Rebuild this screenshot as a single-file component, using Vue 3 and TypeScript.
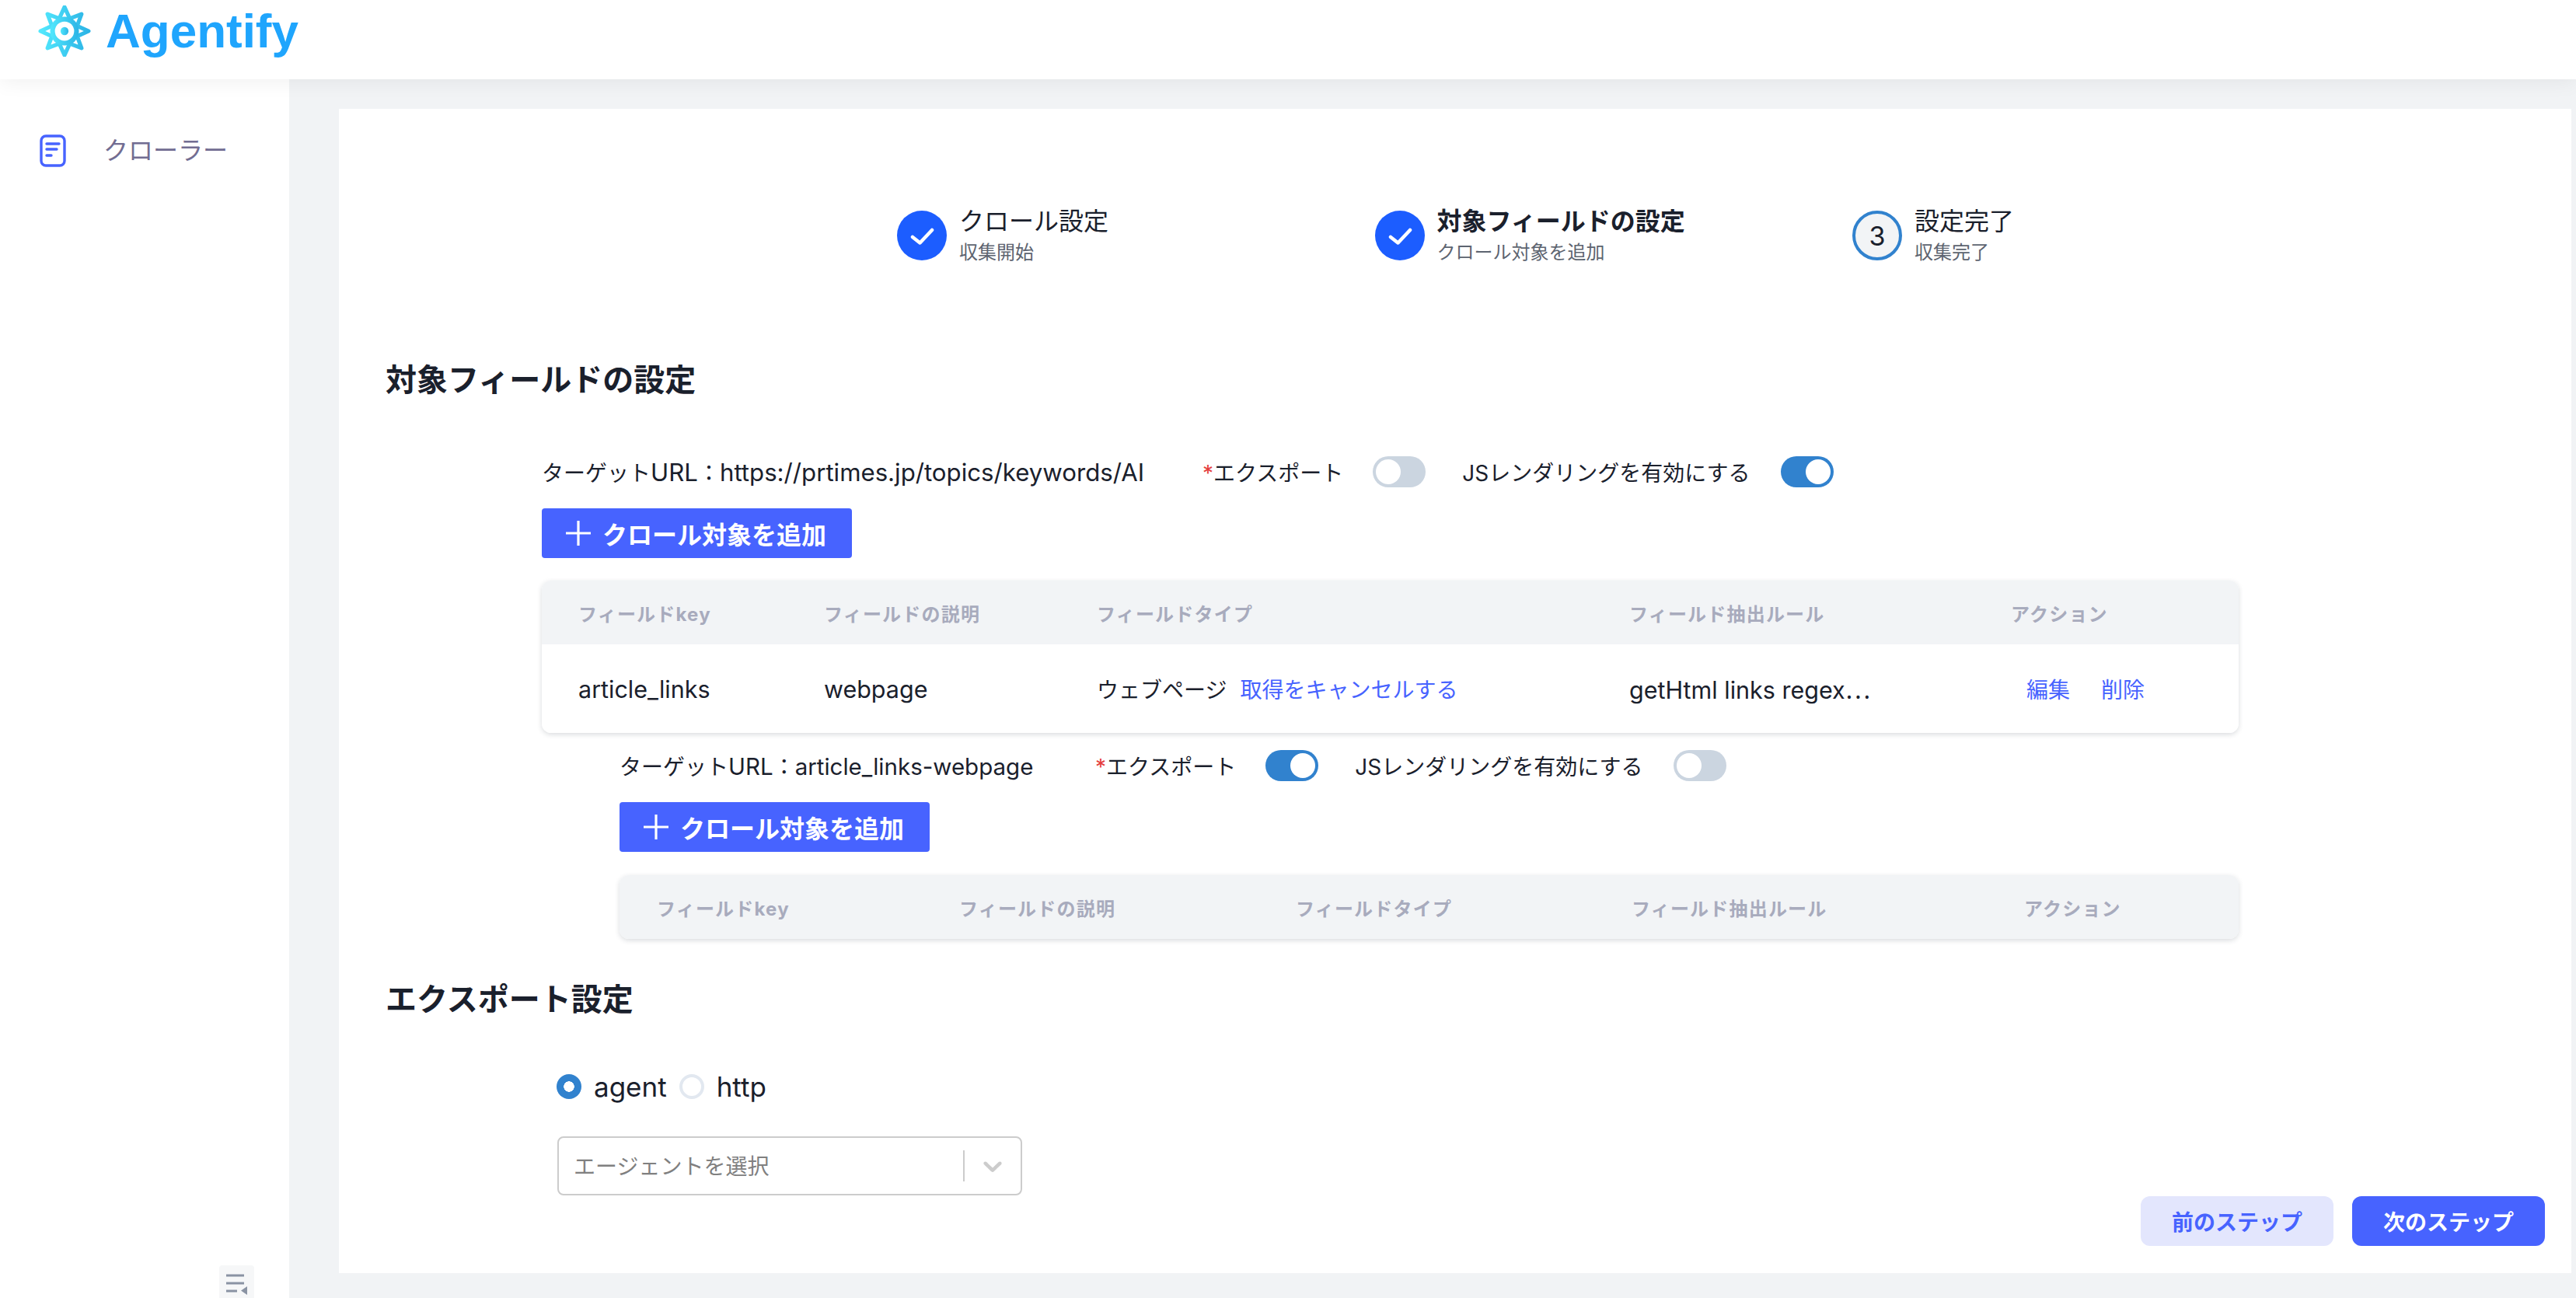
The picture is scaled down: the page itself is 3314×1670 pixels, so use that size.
<script setup lang="ts">
const cx = 33
const cy = 32
const starPoints = Array.from({ length: 16 }, (_, i) => {
  const r = i % 2 === 0 ? 30 : 17
  const a = (Math.PI / 8) * i - Math.PI / 2
  return `${(cx + r * Math.cos(a)).toFixed(2)},${(cy + r * Math.sin(a)).toFixed(2)}`
}).join(' ')

const headers = ['フィールドkey', 'フィールドの説明', 'フィールドタイプ', 'フィールド抽出ルール', 'アクション']
const steps = [
  { title: 'クロール設定', sub: '収集開始', done: true },
  { title: '対象フィールドの設定', sub: 'クロール対象を追加', done: true, strong: true },
  { title: '設定完了', sub: '収集完了', done: false },
]
</script>

<template>
  <div class="app">
    <header class="topbar">
      <div class="logo">
        <svg class="logo-mark" width="70" height="66" viewBox="0 0 66 64" aria-hidden="true">
          <defs>
            <linearGradient id="logoGrad" x1="0" y1="0" x2="1" y2="0">
              <stop offset="0" stop-color="#52e8fd" />
              <stop offset="1" stop-color="#2cb4e6" />
            </linearGradient>
          </defs>
          <polygon :points="starPoints" fill="#fff" stroke="url(#logoGrad)" stroke-width="5" stroke-linejoin="round" />
          <circle cx="33" cy="32" r="18" fill="url(#logoGrad)" />
          <circle cx="33" cy="32" r="12" fill="#fff" />
          <circle cx="33" cy="32" r="5" fill="url(#logoGrad)" />
        </svg>
        <span class="logo-text">Agentify</span>
      </div>
    </header>

    <div class="body">
      <aside class="sidebar">
        <nav class="menu-item">
          <svg width="34" height="42" viewBox="0 0 34 42" aria-hidden="true">
            <rect x="2" y="2" width="30" height="38" rx="6" fill="none" stroke="#4763ff" stroke-width="3.4" />
            <path d="M9 12h16M9 19h13M9 27h6" fill="none" stroke="#4763ff" stroke-width="3.4" stroke-linecap="round" />
          </svg>
          <span class="menu-label">クローラー</span>
        </nav>
        <button class="collapse" aria-label="collapse">
          <svg width="45" height="45" viewBox="0 0 45 45" aria-hidden="true">
            <path d="M9 13h23M9 23h23M9 33h14" stroke="#8a93a3" stroke-width="3" fill="none" />
            <path d="M36 27v11l-8-5.500z" fill="#8a93a3" />
          </svg>
        </button>
      </aside>

      <main class="main">
        <section class="card">
          <ol class="steps">
            <li v-for="s in steps" :key="s.title" class="step">
              <span class="step-icon" :class="{ done: s.done }">
                <svg v-if="s.done" width="32" height="32" viewBox="0 0 32 32" aria-hidden="true">
                  <path d="M4 18l9.500 7.500L29 9" fill="none" stroke="#fff" stroke-width="4.500" stroke-linecap="round" stroke-linejoin="round" />
                </svg>
                <template v-else>3</template>
              </span>
              <span class="step-text">
                <span class="step-title" :class="{ strong: s.strong }">{{ s.title }}</span>
                <span class="step-sub">{{ s.sub }}</span>
              </span>
            </li>
          </ol>

          <h2 class="section-title">対象フィールドの設定</h2>

          <div class="block first">
            <div class="opts">
              <span class="url url-a">ターゲット<span class="lat">URL</span>：<span class="lat">https://prtimes.jp/topics/keywords/AI</span></span>
              <span><i class="req">*</i>エクスポート</span>
              <span class="toggle gap-a"></span>
              <span class="gap-b">JSレンダリングを有効にする</span>
              <span class="toggle on gap-c"></span>
            </div>
            <button class="add-btn">
              <svg width="32" height="32" viewBox="0 0 32 32" aria-hidden="true">
                <path d="M16 0v32M0 16h32" stroke="#fff" stroke-width="3.200" />
              </svg>
              クロール対象を追加
            </button>
            <div class="table table-a">
              <div class="tr th">
                <span v-for="h in headers" :key="h">{{ h }}</span>
              </div>
              <div class="tr td">
                <span class="lat">article_links</span>
                <span class="lat">webpage</span>
                <span>ウェブページ<a class="link type-link">取得をキャンセルする</a></span>
                <span class="lat">getHtml links regex⋯</span>
                <span class="actions"><a class="link">編集</a><a class="link">削除</a></span>
              </div>
            </div>
          </div>

          <div class="block second">
            <div class="opts">
              <span class="url url-b">ターゲット<span class="lat">URL</span>：<span class="lat">article_links-webpage</span></span>
              <span><i class="req">*</i>エクスポート</span>
              <span class="toggle on gap-a"></span>
              <span class="gap-b">JSレンダリングを有効にする</span>
              <span class="toggle gap-c"></span>
            </div>
            <button class="add-btn">
              <svg width="32" height="32" viewBox="0 0 32 32" aria-hidden="true">
                <path d="M16 0v32M0 16h32" stroke="#fff" stroke-width="3.200" />
              </svg>
              クロール対象を追加
            </button>
            <div class="table table-b">
              <div class="tr th">
                <span v-for="h in headers" :key="h">{{ h }}</span>
              </div>
            </div>
          </div>

          <h2 class="section-title export-title">エクスポート設定</h2>

          <div class="export">
            <div class="radios">
              <span class="radio checked"></span><span class="radio-label">agent</span>
              <span class="radio"></span><span class="radio-label">http</span>
            </div>
            <div class="select">
              <span class="placeholder">エージェントを選択</span>
              <span class="sep"></span>
              <svg width="40" height="40" viewBox="0 0 20 20" aria-hidden="true">
                <path fill="#cccccc" d="M4.516 7.548c0.436-0.446 1.043-0.481 1.576 0l3.908 3.747 3.908-3.747c0.533-0.481 1.141-0.446 1.574 0 0.436 0.445 0.408 1.197 0 1.615-0.406 0.418-4.695 4.502-4.695 4.502-0.217 0.223-0.502 0.335-0.787 0.335s-0.57-0.112-0.789-0.335c0 0-4.287-4.084-4.695-4.502s-0.436-1.17 0-1.615z" />
              </svg>
            </div>
          </div>

          <footer class="footer">
            <button class="nav-btn prev">前のステップ</button>
            <button class="nav-btn next">次のステップ</button>
          </footer>
        </section>
      </main>
    </div>
  </div>
</template>

<style scoped>
.app {
  height: 100vh;
  display: flex;
  flex-direction: column;
  overflow: hidden;
  font-family: Inter, "Noto Sans CJK JP", sans-serif;
  font-size: 28px;
  color: #1a202c;
  background: #fff;
}
.lat {
  font-size: 30.500px;
}
.url-a .lat {
  font-size: 31.200px;
}
.url-b .lat {
  font-size: 29.500px;
}
.topbar {
  flex: 0 0 102px;
  background: #fff;
  box-shadow: 0 4px 24px rgba(0, 0, 0, 0.06);
  position: relative;
  z-index: 2;
}
.logo {
  height: 80px;
  display: flex;
  align-items: center;
  gap: 18px;
  padding-left: 48px;
}
.logo-text {
  font-family: "Liberation Sans", Arial, sans-serif;
  font-weight: 700;
  font-size: 62px;
  line-height: 1;
  color: #1fa5fd;
}
.body {
  flex: 1;
  display: flex;
  min-height: 0;
}
.sidebar {
  flex: 0 0 372px;
  position: relative;
  background: #fff;
}
.menu-item {
  display: flex;
  align-items: center;
  gap: 48px;
  padding: 71px 0 0 51px;
  font-size: 32px;
  color: #726d92;
}
.menu-label {
  line-height: 42px;
}
.collapse {
  position: absolute;
  left: 282px;
  top: 1526px;
  width: 45px;
  height: 45px;
  padding: 0;
  border: 0;
  border-radius: 4px;
  background: #f6f7f8;
  display: block;
}
.main {
  flex: 1;
  min-width: 0;
  padding: 38px 6px 32px 64px;
  background: #f1f3f5;
}
.card {
  height: 100%;
  box-sizing: border-box;
  background: #fff;
  padding: 125px 34px 0 60px;
}
.steps {
  list-style: none;
  margin: 0 0 124px;
  padding: 0 0 0 658px;
  display: flex;
}
.step {
  flex: 0 0 614.500px;
  display: flex;
  align-items: center;
  gap: 16px;
}
.step:last-child {
  flex: 0 0 auto;
}
.step-icon {
  width: 64px;
  height: 64px;
  box-sizing: border-box;
  border-radius: 50%;
  border: 4px solid #3182ce;
  background: #f2f4f6;
  display: flex;
  align-items: center;
  justify-content: center;
  font-size: 34px;
  flex: none;
}
.step-icon.done {
  background: #1c5dff;
  border: 0;
}
.step-text {
  display: flex;
  flex-direction: column;
  gap: 4px;
}
.step-title {
  font-size: 32px;
  line-height: 40px;
}
.step-title.strong {
  font-weight: 600;
}
.step-sub {
  font-size: 24px;
  line-height: 32px;
  color: #5d6470;
}
.section-title {
  margin: 0;
  font-size: 40px;
  line-height: 48px;
  font-weight: 600;
}
.block.first {
  margin: 74px 394px 0 201px;
}
.block.second {
  margin: 22px 394px 0 301px;
}
.opts {
  display: flex;
  align-items: center;
  height: 40px;
  white-space: nowrap;
}
.url-a {
  width: 850px;
}
.url-b {
  width: 612px;
}
.req {
  color: #e53e3e;
  font-style: normal;
}
.toggle {
  width: 68px;
  height: 40px;
  box-sizing: border-box;
  border-radius: 20px;
  padding: 4px;
  background: #cbd5e0;
  display: flex;
  flex: none;
}
.toggle::before {
  content: "";
  width: 32px;
  height: 32px;
  border-radius: 50%;
  background: #fff;
}
.toggle.on {
  background: #3182ce;
  justify-content: flex-end;
}
.gap-a {
  margin-left: 38px;
}
.gap-b {
  margin-left: 47px;
}
.gap-c {
  margin-left: 40px;
}
.add-btn {
  display: flex;
  align-items: center;
  gap: 15px;
  height: 64px;
  margin-top: 27px;
  padding: 0 33px 0 31px;
  border: 0;
  border-radius: 4px;
  background: #4763ff;
  color: #fff;
  font: 600 32px Inter, "Noto Sans CJK JP", sans-serif;
  white-space: nowrap;
}
.table {
  margin-top: 29px;
  border-radius: 12px;
  overflow: hidden;
  box-shadow: 0 2px 6px rgba(45, 55, 72, 0.18);
}
.tr {
  display: grid;
  align-items: center;
  padding-left: 47px;
  white-space: nowrap;
}
.table-a .tr {
  grid-template-columns: 316px 351px 685px 491px 1fr;
}
.table-b {
  margin-top: 30px;
}
.table-b .tr {
  padding-left: 48px;
  grid-template-columns: 389px 433px 432px 505px 1fr;
}
.th {
  height: 82px;
  background: #f2f4f6;
  color: #a8abbd;
  font-size: 24px;
  font-weight: 700;
  letter-spacing: 0.05em;
}
.td {
  height: 114px;
  background: #fff;
}
.link {
  color: #4763ff;
}
.type-link {
  margin-left: 17px;
}
.actions {
  display: flex;
  gap: 40px;
  padding-left: 20px;
}
.export-title {
  margin-top: 54px;
}
.export {
  margin: 72px 0 0 220px;
}
.radios {
  display: flex;
  align-items: center;
  height: 32px;
  font-size: 35px;
}
.radio {
  width: 32px;
  height: 32px;
  box-sizing: border-box;
  border-radius: 50%;
  border: 4px solid #e2e8f0;
  background: #fff;
  flex: none;
}
.radio.checked {
  border: 0;
  background: radial-gradient(circle, #fff 0 6.500px, #3182ce 7px);
}
.radio-label {
  margin: 0 16px;
}
.select {
  width: 598px;
  height: 76px;
  box-sizing: border-box;
  margin-top: 48px;
  margin-left: 1px;
  border: 2px solid #cccccc;
  border-radius: 8px;
  display: flex;
  align-items: center;
  padding: 0 16px 0 19px;
}
.placeholder {
  flex: 1;
  color: #808080;
  padding-bottom: 2px;
}
.sep {
  width: 2px;
  height: 40px;
  background: #cccccc;
  margin-right: 16px;
}
.footer {
  display: flex;
  justify-content: flex-end;
  gap: 24px;
  margin-top: 1px;
}
.nav-btn {
  width: 248px;
  height: 64px;
  border: 0;
  border-radius: 12px;
  font: 700 28px Inter, "Noto Sans CJK JP", sans-serif;
}
.prev {
  background: #e3e6fd;
  color: #4763ff;
}
.next {
  background: #4763ff;
  color: #fff;
}
</style>

<style>
html,
body {
  margin: 0;
  overflow: hidden;
}
</style>
